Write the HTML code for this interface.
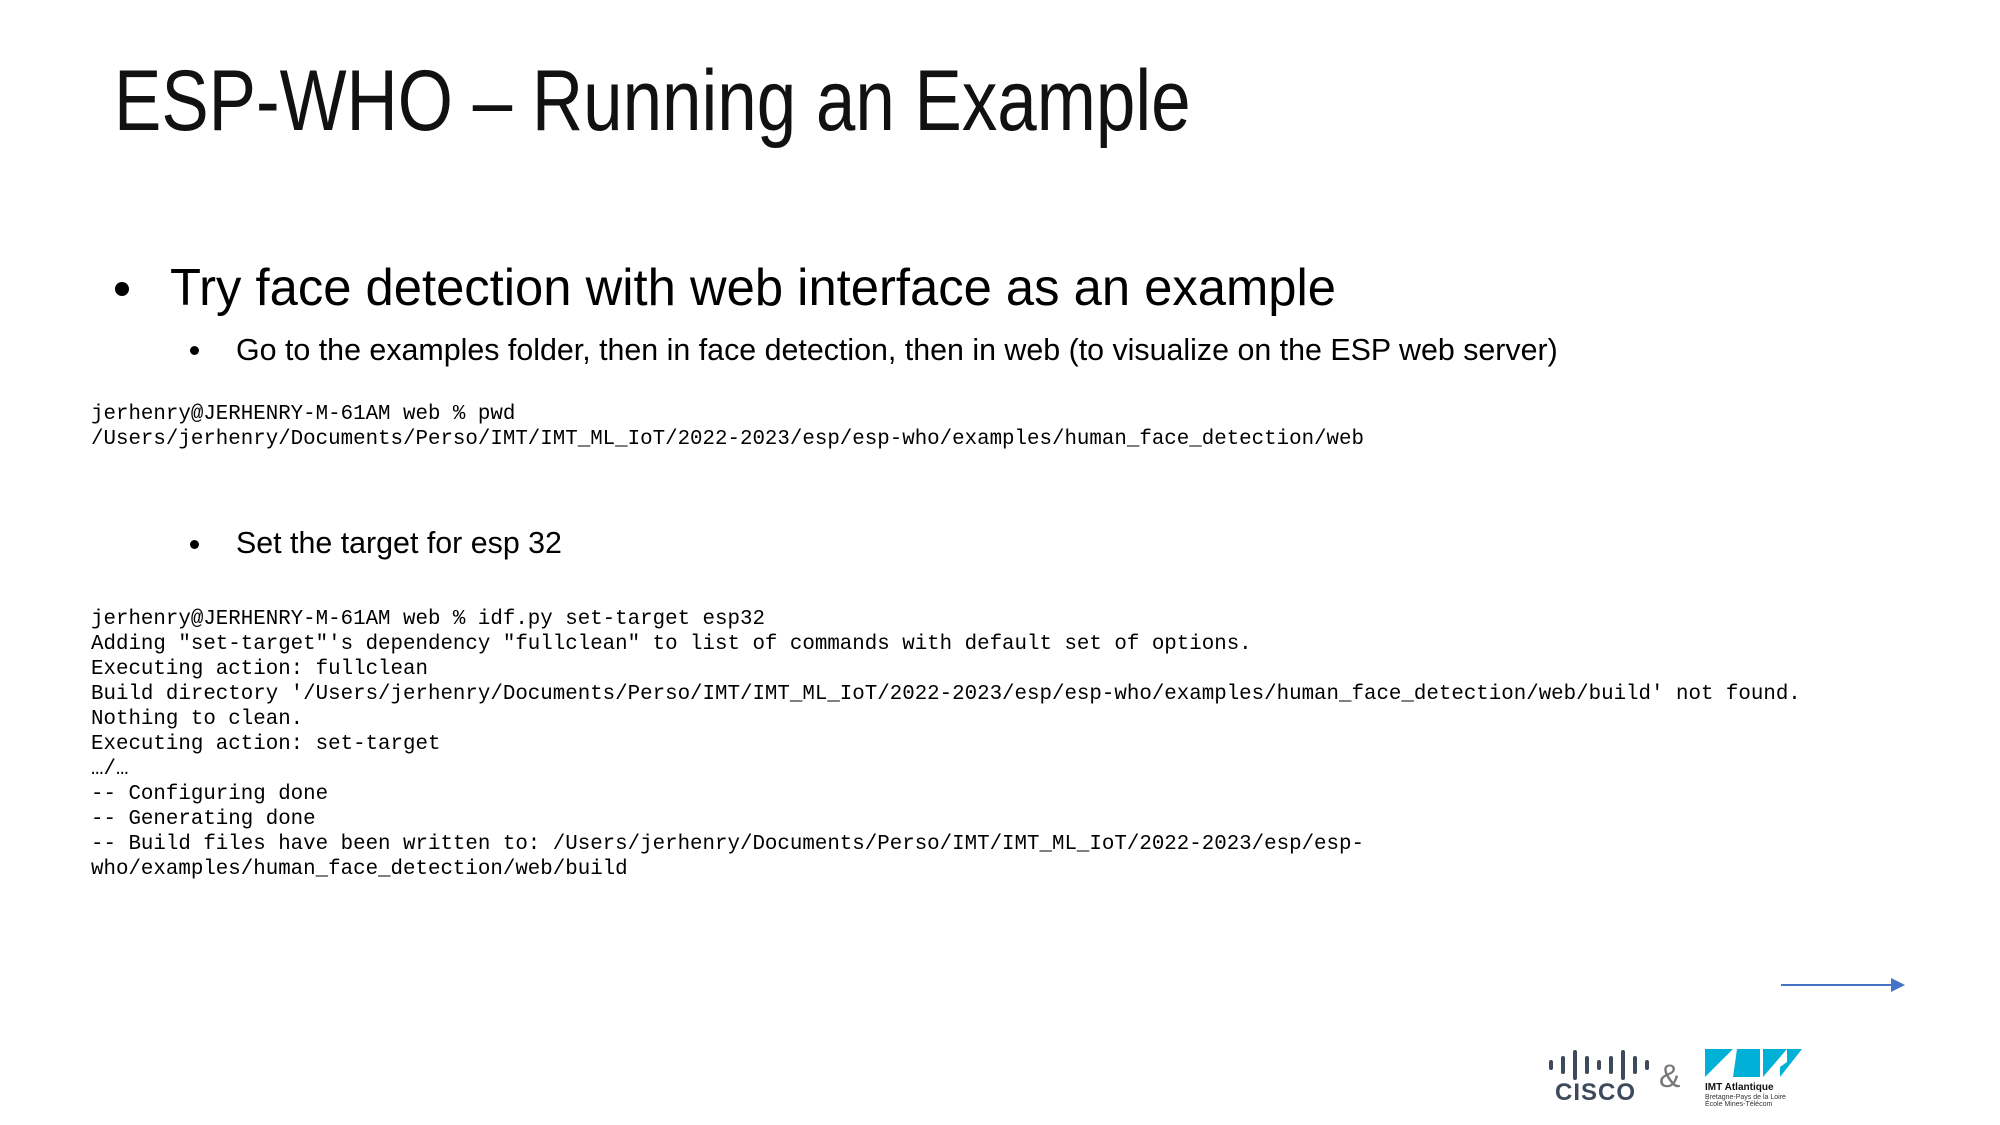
<!DOCTYPE html>
<html><head><meta charset="utf-8"><style>
html,body{margin:0;padding:0;background:#fff;}
body{width:2000px;height:1125px;position:relative;overflow:hidden;font-family:"Liberation Sans",sans-serif;color:#000;}
.a{position:absolute;white-space:nowrap;line-height:1;}
.sx{display:inline-block;transform-origin:0 0;}
pre{position:absolute;margin:0;font-family:"Liberation Mono",monospace;font-size:20.8px;line-height:24.95px;color:#000;}
.dot{position:absolute;border-radius:50%;background:#000;}
</style></head><body>
<div class="a" style="left:114px;top:58px;font-size:86px;color:#111;"><span class="sx" style="transform:scaleX(0.825)">ESP-WHO – Running an Example</span></div>
<div class="dot" style="left:115px;top:282px;width:14px;height:14px;"></div>
<div class="a" style="left:170px;top:262px;font-size:52px;"><span class="sx" style="transform:scaleX(0.976)">Try face detection with web interface as an example</span></div>
<div class="dot" style="left:190px;top:346px;width:9px;height:9px;"></div>
<div class="a" style="left:236px;top:334px;font-size:31px;"><span class="sx" style="transform:scaleX(0.98)">Go to the examples folder, then in face detection, then in web (to visualize on the ESP web server)</span></div>
<pre style="left:91px;top:403px;">jerhenry@JERHENRY-M-61AM web % pwd
/Users/jerhenry/Documents/Perso/IMT/IMT_ML_IoT/2022-2023/esp/esp-who/examples/human_face_detection/web</pre>
<div class="dot" style="left:190px;top:540px;width:9px;height:9px;"></div>
<div class="a" style="left:236px;top:527px;font-size:31px;"><span class="sx" style="transform:scaleX(0.98)">Set the target for esp 32</span></div>
<pre style="left:91px;top:608px;">jerhenry@JERHENRY-M-61AM web % idf.py set-target esp32
Adding "set-target"'s dependency "fullclean" to list of commands with default set of options.
Executing action: fullclean
Build directory '/Users/jerhenry/Documents/Perso/IMT/IMT_ML_IoT/2022-2023/esp/esp-who/examples/human_face_detection/web/build' not found.
Nothing to clean.
Executing action: set-target
…/…
-- Configuring done
-- Generating done
-- Build files have been written to: /Users/jerhenry/Documents/Perso/IMT/IMT_ML_IoT/2022-2023/esp/esp-
who/examples/human_face_detection/web/build</pre>
<svg style="position:absolute;left:0;top:0" width="2000" height="1125">
<line x1="1796" y1="993" x2="1908" y2="993" stroke="#4472c4" stroke-width="2" transform="translate(-15,-8)"/>
<polygon points="1906,986 1920,993 1906,1000" fill="#4472c4" transform="translate(-15,-8)"/>
<g transform="translate(-15,-8)">
<g stroke="#3d4a5c" stroke-width="4" stroke-linecap="round">
<line x1="1566" y1="1070" x2="1566" y2="1076"/>
<line x1="1578" y1="1066" x2="1578" y2="1080"/>
<line x1="1590" y1="1060" x2="1590" y2="1086"/>
<line x1="1602" y1="1066" x2="1602" y2="1080"/>
<line x1="1614" y1="1070" x2="1614" y2="1076"/>
<line x1="1626" y1="1066" x2="1626" y2="1080"/>
<line x1="1638" y1="1060" x2="1638" y2="1086"/>
<line x1="1650" y1="1066" x2="1650" y2="1080"/>
<line x1="1662" y1="1070" x2="1662" y2="1076"/>
</g>
<text x="1570" y="1108" font-family="Liberation Sans" font-weight="bold" font-size="24" fill="#3d4a5c" letter-spacing="1">CISCO</text>
<text x="1674" y="1095" font-family="Liberation Sans" font-size="32" fill="#777">&amp;</text>
<polygon points="1720,1057 1748,1057 1720,1085" fill="#00b0d6"/>
<polygon points="1752,1057 1775,1057 1775,1085 1748,1085" fill="#00b0d6"/>
<polygon points="1778,1057 1802,1057 1778,1085" fill="#00b0d6"/>
<polygon points="1802,1057 1817,1057 1795,1085 1795,1075 1802,1070" fill="#00b0d6"/>
<text x="1720" y="1098" font-family="Liberation Sans" font-weight="bold" font-size="10" fill="#111">IMT Atlantique</text>
<text x="1720" y="1107" font-family="Liberation Sans" font-size="7" fill="#333">Bretagne-Pays de la Loire</text>
<text x="1720" y="1114" font-family="Liberation Sans" font-size="7" fill="#333">École Mines-Télécom</text>
</g>
</svg>
</body></html>
